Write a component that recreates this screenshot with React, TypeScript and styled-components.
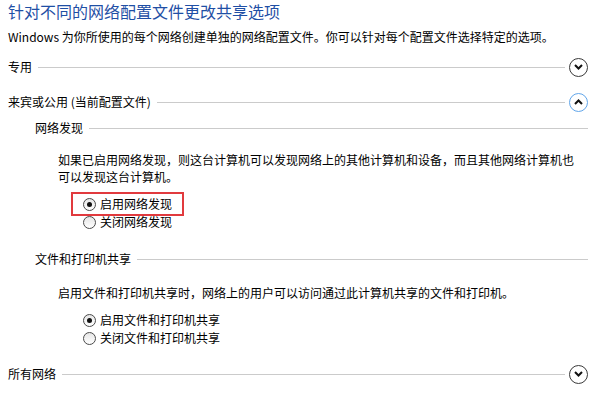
import styled, { createGlobalStyle } from "styled-components";

const GlobalStyle = createGlobalStyle`
  html, body {
    margin: 0;
    padding: 0;
    background: #fff;
  }
  body {
    font-family: "Noto Sans CJK SC", "Microsoft YaHei", sans-serif;
    font-size: 12px;
    color: #000;
  }
`;

const Page = styled.div`
  width: 600px;
  height: 399px;
  box-sizing: border-box;
  padding: 0 12px 0 8px;
  overflow: hidden;
`;

const Title = styled.h1`
  margin: 0;
  font-size: 16px;
  font-weight: normal;
  line-height: 22px;
  color: #1f4fa5;
`;

const Intro = styled.p`
  margin: 6px 0 0;
  line-height: 18px;
`;

const SectionHeader = styled.div<{ $top: number }>`
  display: flex;
  align-items: center;
  height: 20px;
  margin-top: ${(p) => p.$top}px;
`;

const GroupHeader = styled.div<{ $top: number }>`
  display: flex;
  align-items: center;
  height: 18px;
  margin: ${(p) => p.$top}px 0 0 27px;
`;

const Label = styled.span`
  white-space: nowrap;
  line-height: 18px;
`;

const Rule = styled.div<{ $end?: number }>`
  flex: 1;
  height: 1px;
  background: #cbcbcb;
  margin: 0 ${(p) => p.$end ?? 0}px 0 6px;
`;

const Toggle = styled.button<{ $open?: boolean }>`
  width: 19px;
  height: 19px;
  box-sizing: border-box;
  border-radius: 50%;
  border: 1px solid ${(p) => (p.$open ? "#62a6ea" : "#3a3a3a")};
  background: #fff;
  padding: 0;
  display: flex;
  align-items: center;
  justify-content: center;
  cursor: pointer;
`;

const Para = styled.p<{ $top: number }>`
  margin: ${(p) => p.$top}px 0 0 50px;
  width: 522px;
  line-height: 17px;
`;

const RadioList = styled.div<{ $top: number }>`
  display: flex;
  flex-direction: column;
  align-items: flex-start;
  margin: ${(p) => p.$top}px 0 0 75px;
`;

const RadioRow = styled.label<{ $highlight?: boolean }>`
  position: relative;
  display: inline-flex;
  align-items: center;
  height: 18px;
  line-height: 18px;
  cursor: pointer;

  ${(p) =>
    p.$highlight &&
    `
    &::after {
      content: "";
      position: absolute;
      inset: -3px -12px;
      border: 2px solid #e13a3e;
      pointer-events: none;
    }
  `}
`;

const RadioDot = styled.span<{ $checked?: boolean }>`
  position: relative;
  width: 13px;
  height: 13px;
  box-sizing: border-box;
  border-radius: 50%;
  border: 1px solid #4a4a4a;
  background: linear-gradient(#e6e6e6, #ffffff);
  margin-right: 4px;
  flex-shrink: 0;

  ${(p) =>
    p.$checked &&
    `
    &::after {
      content: "";
      position: absolute;
      left: 3px;
      top: 3px;
      width: 5px;
      height: 5px;
      border-radius: 50%;
      background: #111;
    }
  `}
`;

const Chevron = ({ up }: { up?: boolean }) => (
  <svg width="9" height="6" viewBox="0 0 9 6">
    <polyline
      points={up ? "1,5 4.5,1.5 8,5" : "1,1 4.5,4.5 8,1"}
      fill="none"
      stroke="#111"
      strokeWidth="2"
    />
  </svg>
);

const Section = ({
  title,
  top,
  open,
}: {
  title: string;
  top: number;
  open?: boolean;
}) => (
  <SectionHeader $top={top}>
    <Label>{title}</Label>
    <Rule $end={4} />
    <Toggle $open={open}>
      <Chevron up={open} />
    </Toggle>
  </SectionHeader>
);

const Radio = ({
  label,
  checked,
  highlight,
}: {
  label: string;
  checked?: boolean;
  highlight?: boolean;
}) => (
  <RadioRow $highlight={highlight}>
    <RadioDot $checked={checked} />
    {label}
  </RadioRow>
);

export default function App() {
  return (
    <>
      <GlobalStyle />
      <Page>
        <Title>针对不同的网络配置文件更改共享选项</Title>
        <Intro>
          Windows 为你所使用的每个网络创建单独的网络配置文件。你可以针对每个配置文件选择特定的选项。
        </Intro>

        <Section title="专用" top={11} />
        <Section title="来宾或公用 (当前配置文件)" top={15} open />

        <GroupHeader $top={7}>
          <Label>网络发现</Label>
          <Rule />
        </GroupHeader>
        <Para $top={14}>
          如果已启用网络发现，则这台计算机可以发现网络上的其他计算机和设备，而且其他网络计算机也可以发现这台计算机。
        </Para>
        <RadioList $top={10}>
          <Radio label="启用网络发现" checked highlight />
          <Radio label="关闭网络发现" />
        </RadioList>

        <GroupHeader $top={19}>
          <Label>文件和打印机共享</Label>
          <Rule />
        </GroupHeader>
        <Para $top={16}>
          启用文件和打印机共享时，网络上的用户可以访问通过此计算机共享的文件和打印机。
        </Para>
        <RadioList $top={10}>
          <Radio label="启用文件和打印机共享" checked />
          <Radio label="关闭文件和打印机共享" />
        </RadioList>

        <Section title="所有网络" top={17} />
      </Page>
    </>
  );
}
